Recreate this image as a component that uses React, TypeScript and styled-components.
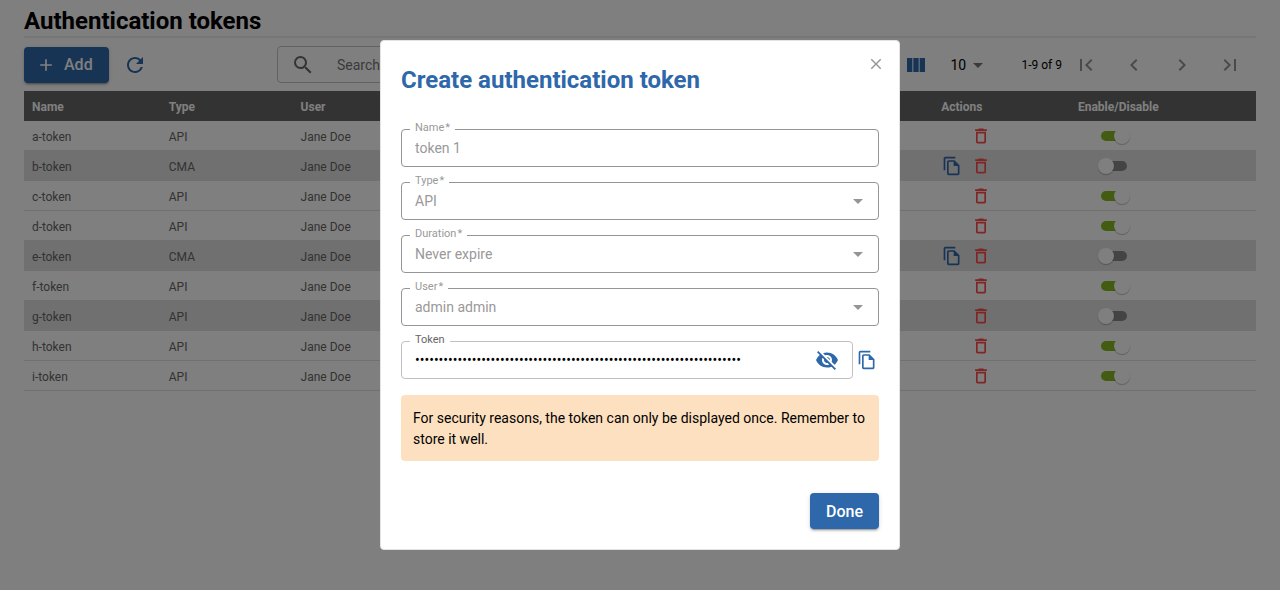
import React, { useState } from "react";
import styled, { createGlobalStyle } from "styled-components";
import {
  MdAdd,
  MdArrowDropDown,
  MdChevronLeft,
  MdChevronRight,
  MdClose,
  MdDeleteOutline,
  MdFirstPage,
  MdLastPage,
  MdOutlineFileCopy,
  MdRefresh,
  MdSearch,
  MdViewColumn,
  MdVisibilityOff,
} from "react-icons/md";

const PRIMARY = "#2e68aa";

const GlobalStyle = createGlobalStyle`
  *, *::before, *::after { box-sizing: border-box; }
  body {
    margin: 0;
    background: #fff;
    color: #000;
    font-family: Roboto, "Liberation Sans", sans-serif;
    font-size: 14px;
  }
  button, input, select { font-family: inherit; margin: 0; }
  svg { display: block; flex: none; }
`;

const Page = styled.main`
  padding: 6px 24px;
`;

const PageTitle = styled.h1`
  margin: 0;
  font-size: 24px;
  line-height: 30px;
  font-weight: 700;
  border-bottom: 2px solid #ededed;
`;

const Toolbar = styled.div`
  display: flex;
  align-items: center;
  padding: 8px 0;
`;

const ToolbarActions = styled.div`
  display: flex;
  align-items: center;
  gap: 14px;
  width: 253px;
`;

const PrimaryButton = styled.button<{ $withIcon?: boolean }>`
  display: inline-flex;
  align-items: center;
  gap: 8px;
  height: 36px;
  padding: 0 16px 0 ${(p) => (p.$withIcon ? 12 : 16)}px;
  border: 0;
  border-radius: 4px;
  background: ${PRIMARY};
  color: #fff;
  font-size: 16px;
  font-weight: 500;
  box-shadow: 0 3px 1px -2px rgba(0, 0, 0, 0.2), 0 2px 2px rgba(0, 0, 0, 0.14),
    0 1px 5px rgba(0, 0, 0, 0.12);
`;

const IconButton = styled.button<{ $color?: string; $width?: number }>`
  display: inline-flex;
  align-items: center;
  justify-content: center;
  width: ${(p) => (p.$width ? `${p.$width}px` : "auto")};
  padding: 0;
  border: 0;
  background: none;
  color: ${(p) => p.$color ?? PRIMARY};
`;

const SearchBox = styled.label`
  display: flex;
  align-items: center;
  gap: 22px;
  width: 320px;
  height: 37px;
  padding: 0 13px;
  border: 1px solid #c4c4c4;
  border-radius: 4px;
  color: #666;
`;

const SearchInput = styled.input`
  flex: 1;
  min-width: 0;
  padding: 0;
  border: 0;
  background: none;
  font-size: 14px;
  &::placeholder { color: #757575; opacity: 1; }
`;

const Paging = styled.div`
  display: flex;
  align-items: center;
  margin-left: auto;
  padding-right: 2px;
`;

const PageSize = styled.span`
  display: flex;
  align-items: center;
  margin: 0 31px 0 22px;
  color: #757575;
`;

const PageSizeSelect = styled.select`
  appearance: none;
  padding: 0;
  border: 0;
  background: none;
  color: #000;
  font-size: 14px;
`;

const PageRange = styled.span`
  font-size: 12px;
`;

const TokenTable = styled.table`
  width: 100%;
  table-layout: fixed;
  border-collapse: separate;
  border-spacing: 0;
  font-size: 12px;
`;

const Column = styled.col<{ $share: number }>`
  width: ${(p) => p.$share}%;
`;

const HeadCell = styled.th`
  height: 30px;
  padding: 2px 8px 0;
  background: #666;
  color: #fff;
  font-weight: 700;
  text-align: left;
`;

const Row = styled.tr<{ $disabled: boolean }>`
  background: ${(p) => (p.$disabled ? "#e0e0e0" : "transparent")};
`;

const Cell = styled.td<{ $indent?: number }>`
  height: 30px;
  padding: 0 8px 0 ${(p) => p.$indent ?? 8}px;
  border-bottom: 1px solid #e0e0e0;
  color: #666;
`;

const TextCell = styled(Cell)`
  padding-top: 2px;
`;

const RowActions = styled.div`
  display: flex;
  justify-content: flex-end;
  gap: 9px;
  width: 50px;
`;

const Switch = styled.input`
  appearance: none;
  display: block;
  position: relative;
  width: 26px;
  height: 10px;
  border-radius: 5px;
  background: #888;
  &::before {
    content: "";
    position: absolute;
    top: -3px;
    left: -3px;
    width: 16px;
    height: 16px;
    border-radius: 50%;
    background: #fff;
    box-shadow: 0 1px 1px rgba(0, 0, 0, 0.25);
  }
  &:checked { background: #88b922; }
  &:checked::before { left: 13px; }
`;

const Backdrop = styled.div`
  position: fixed;
  inset: 0;
  display: flex;
  align-items: center;
  justify-content: center;
  background: rgba(0, 0, 0, 0.5);
`;

const Dialog = styled.form`
  position: relative;
  width: 520px;
  max-width: 100%;
  padding: 20px;
  border: 1px solid #e3e3e3;
  border-radius: 4px;
  background: #fff;
`;

const CloseButton = styled(IconButton)`
  position: absolute;
  top: 14px;
  right: 14px;
`;

const DialogTitle = styled.h2`
  margin: 0 0 30px;
  color: ${PRIMARY};
  font-size: 24px;
  line-height: 38px;
  font-weight: 700;
`;

const Fields = styled.div`
  display: flex;
  flex-direction: column;
  gap: 15px;
`;

const FieldBox = styled.div<{ $muted?: boolean }>`
  position: relative;
  display: flex;
  align-items: center;
  flex: 1;
  height: 38px;
  padding: 0 8px 0 0;
  border: 1px solid ${(p) => (p.$muted ? "#959595" : "#c0c0c0")};
  border-radius: 4px;
  color: #959595;
`;

const FieldLabel = styled.label<{ $muted?: boolean }>`
  position: absolute;
  top: -10px;
  left: 8px;
  padding: 0 5px;
  background: #fff;
  color: ${(p) => (p.$muted ? "#999" : "#666")};
  font-size: 11px;
  line-height: 16px;
`;

const RequiredMark = styled.span`
  margin-left: 1px;
`;

const TextInput = styled.input`
  flex: 1;
  min-width: 0;
  height: 36px;
  padding: 0 0 0 13px;
  border: 0;
  background: none;
  color: #000;
  font-size: 14px;
  &:disabled { color: #999; }
`;

const SelectInput = styled.select`
  appearance: none;
  flex: 1;
  height: 36px;
  margin-right: -24px;
  padding: 0 24px 0 13px;
  border: 0;
  background: none;
  font-size: 14px;
  &:disabled { color: #999; opacity: 1; }
`;

const TokenRow = styled.div`
  display: flex;
  align-items: center;
  gap: 4px;
  padding-right: 2px;
`;

const VisibilityButton = styled(IconButton)`
  margin-right: 5px;
`;

const Warning = styled.p`
  margin: 16px 0 32px;
  padding: 13px 12px 11px;
  border-radius: 4px;
  background: #fde0c0;
  font-size: 14px;
  line-height: 21px;
`;

const DialogActions = styled.div`
  display: flex;
  justify-content: flex-end;
`;

type Token = { name: string; type: string; enabled: boolean };

const initialTokens: Token[] = [
  { name: "a-token", type: "API", enabled: true },
  { name: "b-token", type: "CMA", enabled: false },
  { name: "c-token", type: "API", enabled: true },
  { name: "d-token", type: "API", enabled: true },
  { name: "e-token", type: "CMA", enabled: false },
  { name: "f-token", type: "API", enabled: true },
  { name: "g-token", type: "API", enabled: false },
  { name: "h-token", type: "API", enabled: true },
  { name: "i-token", type: "API", enabled: true },
];

const selects = [
  { id: "type", label: "Type", value: "API" },
  { id: "duration", label: "Duration", value: "Never expire" },
  { id: "user", label: "User", value: "admin admin" },
];

const pageButtons = [
  { label: "First page", Icon: MdFirstPage },
  { label: "Previous page", Icon: MdChevronLeft },
  { label: "Next page", Icon: MdChevronRight },
  { label: "Last page", Icon: MdLastPage },
];

export default function App() {
  const [tokens, setTokens] = useState(initialTokens);

  const toggle = (name: string) =>
    setTokens((list) =>
      list.map((t) => (t.name === name ? { ...t, enabled: !t.enabled } : t))
    );

  return (
    <>
      <GlobalStyle />
      <Page>
        <PageTitle>Authentication tokens</PageTitle>
        <Toolbar>
          <ToolbarActions>
            <PrimaryButton type="button" $withIcon>
              <MdAdd size={20} />
              Add
            </PrimaryButton>
            <IconButton type="button" aria-label="Refresh">
              <MdRefresh size={24} />
            </IconButton>
          </ToolbarActions>
          <SearchBox>
            <MdSearch size={24} />
            <SearchInput placeholder="Search" aria-label="Search" />
          </SearchBox>
          <Paging>
            <IconButton type="button" aria-label="Columns">
              <MdViewColumn size={24} />
            </IconButton>
            <PageSize>
              <PageSizeSelect aria-label="Rows per page" defaultValue="10">
                <option>10</option>
              </PageSizeSelect>
              <MdArrowDropDown size={24} />
            </PageSize>
            <PageRange>1-9 of 9</PageRange>
            {pageButtons.map(({ label, Icon }) => (
              <IconButton
                key={label}
                type="button"
                $color="#949494"
                $width={48}
                aria-label={label}
              >
                <Icon size={24} />
              </IconButton>
            ))}
          </Paging>
        </Toolbar>
        <TokenTable>
          <colgroup>
            <Column $share={11.1} />
            <Column $share={10.7} />
            <Column $share={52} />
            <Column $share={11.1} />
            <Column $share={15.1} />
          </colgroup>
          <thead>
            <tr>
              <HeadCell>Name</HeadCell>
              <HeadCell>Type</HeadCell>
              <HeadCell>User</HeadCell>
              <HeadCell>Actions</HeadCell>
              <HeadCell>Enable/Disable</HeadCell>
            </tr>
          </thead>
          <tbody>
            {tokens.map((token) => (
              <Row key={token.name} $disabled={!token.enabled}>
                <TextCell>{token.name}</TextCell>
                <TextCell>{token.type}</TextCell>
                <TextCell>Jane Doe</TextCell>
                <Cell>
                  <RowActions>
                    {token.type === "CMA" && (
                      <IconButton type="button" aria-label={`Copy ${token.name}`}>
                        <MdOutlineFileCopy size={20} />
                      </IconButton>
                    )}
                    <IconButton
                      type="button"
                      $color="#ff4a4a"
                      aria-label={`Delete ${token.name}`}
                    >
                      <MdDeleteOutline size={20} />
                    </IconButton>
                  </RowActions>
                </Cell>
                <Cell $indent={31}>
                  <Switch
                    type="checkbox"
                    role="switch"
                    aria-label={`Enable ${token.name}`}
                    checked={token.enabled}
                    onChange={() => toggle(token.name)}
                  />
                </Cell>
              </Row>
            ))}
          </tbody>
        </TokenTable>
      </Page>

      <Backdrop>
        <Dialog
          role="dialog"
          aria-labelledby="dialog-title"
          onSubmit={(e) => e.preventDefault()}
        >
          <CloseButton type="button" $color="#999" aria-label="Close">
            <MdClose size={18} />
          </CloseButton>
          <DialogTitle id="dialog-title">Create authentication token</DialogTitle>
          <Fields>
            <FieldBox $muted>
              <FieldLabel $muted htmlFor="name">
                Name<RequiredMark>*</RequiredMark>
              </FieldLabel>
              <TextInput id="name" defaultValue="token 1" disabled />
            </FieldBox>
            {selects.map((field) => (
              <FieldBox $muted key={field.id}>
                <FieldLabel $muted htmlFor={field.id}>
                  {field.label}
                  <RequiredMark>*</RequiredMark>
                </FieldLabel>
                <SelectInput id={field.id} defaultValue={field.value} disabled>
                  <option>{field.value}</option>
                </SelectInput>
                <MdArrowDropDown size={24} />
              </FieldBox>
            ))}
            <TokenRow>
              <FieldBox>
                <FieldLabel htmlFor="token">Token</FieldLabel>
                <TextInput
                  id="token"
                  type="password"
                  autoComplete="off"
                  readOnly
                  value={"x".repeat(69)}
                />
                <VisibilityButton type="button" aria-label="Show token">
                  <MdVisibilityOff size={24} />
                </VisibilityButton>
              </FieldBox>
              <IconButton type="button" aria-label="Copy token">
                <MdOutlineFileCopy size={20} />
              </IconButton>
            </TokenRow>
          </Fields>
          <Warning>
            For security reasons, the token can only be displayed once. Remember to
            store it well.
          </Warning>
          <DialogActions>
            <PrimaryButton type="submit">Done</PrimaryButton>
          </DialogActions>
        </Dialog>
      </Backdrop>
    </>
  );
}
